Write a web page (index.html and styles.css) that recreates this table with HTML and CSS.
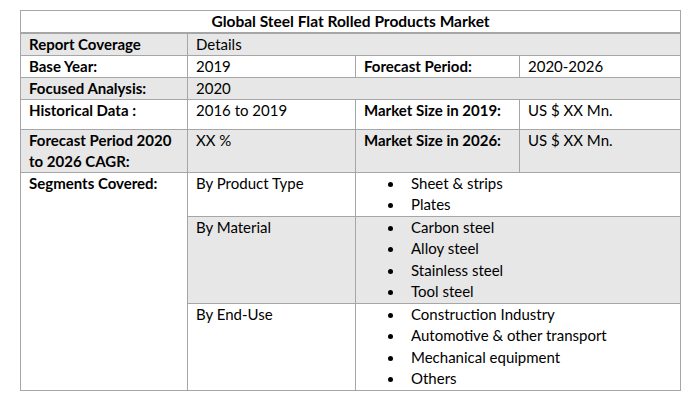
FILE: index.html
```html
<!DOCTYPE html>
<html>
<head>
<meta charset="utf-8">
<link rel="stylesheet" href="styles.css">
</head>
<body>
<table class="report">
  <colgroup>
    <col class="c1"><col class="c2"><col class="c3"><col class="c4">
  </colgroup>
  <tr class="r-title"><th colspan="4" class="title">Global Steel Flat Rolled Products Market</th></tr>
  <tr class="r-22 gray"><td class="b">Report Coverage</td><td colspan="3">Details</td></tr>
  <tr class="r-22"><td class="b">Base Year:</td><td>2019</td><td class="b">Forecast Period:</td><td>2020-2026</td></tr>
  <tr class="r-22 gray"><td class="b">Focused Analysis:</td><td colspan="3">2020</td></tr>
  <tr class="r-30"><td class="b">Historical Data :</td><td>2016 to 2019</td><td class="b">Market Size in 2019:</td><td>US $ XX Mn.</td></tr>
  <tr class="r-42 gray"><td class="b">Forecast Period 2020 to 2026 CAGR:</td><td>XX %</td><td class="b">Market Size in 2026:</td><td>US $ XX Mn.</td></tr>
  <tr class="r-44"><td class="b" rowspan="3">Segments Covered:</td><td>By Product Type</td>
    <td colspan="2"><ul class="list"><li>Sheet &amp; strips</li><li>Plates</li></ul></td></tr>
  <tr class="r-87 gray"><td>By Material</td>
    <td colspan="2"><ul class="list"><li>Carbon steel</li><li>Alloy steel</li><li>Stainless steel</li><li>Tool steel</li></ul></td></tr>
  <tr class="r-87"><td>By End-Use</td>
    <td colspan="2"><ul class="list"><li>Construction Industry</li><li>Automotive &amp; other transport</li><li>Mechanical equipment</li><li>Others</li></ul></td></tr>
</table>
</body>
</html>
```
FILE: styles.css
```css
html, body {
  margin: 0;
  padding: 0;
  background: #fff;
}
body {
  font-family: "Lato", "Liberation Sans", sans-serif;
  font-size: 15px;
  color: #000;
}
.report {
  margin: 10px 0 0 20px;
  border-collapse: collapse;
  table-layout: fixed;
  width: 660px;
}
.c1 { width: 167px; }
.c2 { width: 168px; }
.c3 { width: 164px; }
.c4 { width: 161px; }
.report th, .report td {
  border: 1px solid #a6a6a6;
  vertical-align: top;
  text-align: left;
  padding: 0 8px 0 8px;
  line-height: 21px;
  font-weight: normal;
}
.report td.b { font-weight: bold; }
.report th.title {
  text-align: center;
  font-weight: bold;
  font-size: 15.5px;
  border-bottom: 2px solid #a6a6a6;
  height: 21px;
  line-height: 21px;
  padding: 0;
}
.gray td { background: #e7e7e7; }
.gray td[rowspan] { background: #fff; }
.r-22 td { height: 21px; }
.r-30 td { height: 29px; }
.r-42 td { height: 41px; }
.r-44 td { height: 43px; }
.r-87 td { height: 86px; }
.list {
  list-style: none;
  margin: 0;
  padding: 0 0 0 47px;
}
.list li {
  position: relative;
  line-height: 21.3px;
}
.list li::before {
  content: "";
  position: absolute;
  left: -23px;
  top: 9px;
  width: 5px;
  height: 5px;
  border-radius: 50%;
  background: #000;
}
```
